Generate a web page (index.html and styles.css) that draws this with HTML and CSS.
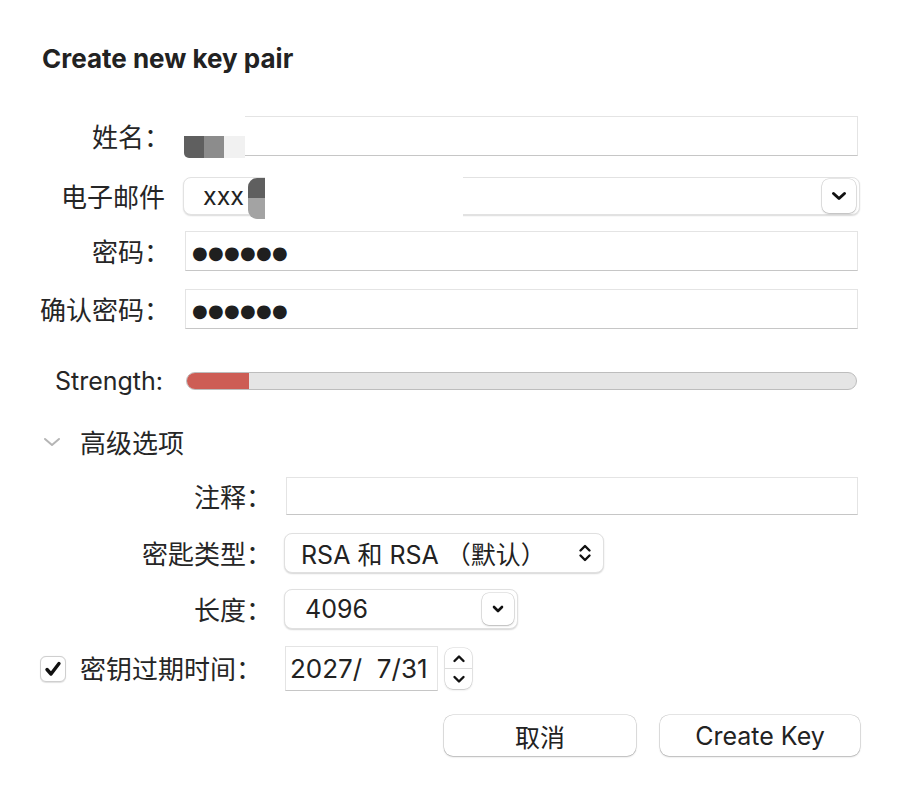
FILE: index.html
```html
<!DOCTYPE html>
<html lang="zh">
<head>
<meta charset="utf-8">
<title>Create new key pair</title>
<link rel="stylesheet" href="styles.css">
</head>
<body>
<div class="dialog">
  <h1 class="title">Create new key pair</h1>

  <div class="row row-name">
    <label class="label">姓名：</label>
    <div class="field field-text has-overlay">
      <div class="mosaic-name">
        <span class="m-white"></span>
        <span class="m-blocks"><i class="b1"></i><i class="b2"></i><i class="b3"></i></span>
      </div>
    </div>
  </div>

  <div class="row row-email">
    <label class="label label-nocolon">电子邮件</label>
    <div class="combo has-overlay">
      <span class="combo-text">xxx</span>
      <div class="mosaic-email"><i class="e1"></i><i class="e2"></i></div>
      <div class="mask-email"></div>
      <span class="drop-btn">
        <svg width="16" height="10" viewBox="0 0 16 10"><polyline points="2.5,2.5 8,7.5 13.5,2.5" fill="none" stroke="#111" stroke-width="3" stroke-linecap="round" stroke-linejoin="round"/></svg>
      </span>
    </div>
  </div>

  <div class="row row-pass">
    <label class="label">密码：</label>
    <div class="field field-text"><span class="dots">●●●●●●</span></div>
  </div>

  <div class="row row-confirm">
    <label class="label">确认密码：</label>
    <div class="field field-text"><span class="dots">●●●●●●</span></div>
  </div>

  <div class="row row-strength">
    <span class="label label-strength">Strength:</span>
    <div class="meter"><div class="meter-fill" style="width:62px"></div></div>
  </div>

  <div class="row row-adv">
    <svg class="adv-chev" width="18" height="10" viewBox="0 0 18 10"><polyline points="2,2 9,8 16,2" fill="none" stroke="#b5b5b5" stroke-width="2" stroke-linecap="round" stroke-linejoin="round"/></svg>
    <span class="adv-text">高级选项</span>
  </div>

  <div class="row row-comment">
    <label class="label label-adv">注释：</label>
    <div class="field field-text field-adv"></div>
  </div>

  <div class="row row-type">
    <label class="label label-adv">密匙类型：</label>
    <div class="popup popup-type">
      <span class="popup-text">RSA 和 RSA （默认）</span>
      <svg class="updown" width="14" height="20" viewBox="0 0 14 20"><polyline points="2.5,7.5 7,3 11.5,7.5" fill="none" stroke="#111" stroke-width="2.4" stroke-linecap="round" stroke-linejoin="round"/><polyline points="2.5,12.5 7,17 11.5,12.5" fill="none" stroke="#111" stroke-width="2.4" stroke-linecap="round" stroke-linejoin="round"/></svg>
    </div>
  </div>

  <div class="row row-length">
    <label class="label label-adv">长度：</label>
    <div class="popup popup-length">
      <span class="popup-text popup-num">4096</span>
      <span class="drop-btn drop-small">
        <svg width="12" height="8" viewBox="0 0 12 8"><polyline points="2,2 6,6 10,2" fill="none" stroke="#111" stroke-width="2.6" stroke-linecap="round" stroke-linejoin="round"/></svg>
      </span>
    </div>
  </div>

  <div class="row row-expire">
    <span class="checkbox">
      <svg width="18" height="16" viewBox="0 0 18 16"><polyline points="3,8.5 7,13 15,2.5" fill="none" stroke="#111" stroke-width="3.4" stroke-linecap="round" stroke-linejoin="round"/></svg>
    </span>
    <span class="expire-label">密钥过期时间：</span>
    <div class="date-field"><span class="date-text">2027/&nbsp;&nbsp;7/31</span></div>
    <div class="stepper">
      <span class="step step-up"><svg width="14" height="9" viewBox="0 0 14 9"><polyline points="2.5,7 7,2.5 11.5,7" fill="none" stroke="#111" stroke-width="2.4" stroke-linecap="round" stroke-linejoin="round"/></svg></span>
      <span class="step step-down"><svg width="14" height="9" viewBox="0 0 14 9"><polyline points="2.5,2 7,6.5 11.5,2" fill="none" stroke="#111" stroke-width="2.4" stroke-linecap="round" stroke-linejoin="round"/></svg></span>
    </div>
  </div>

  <div class="row row-buttons">
    <button class="btn btn-cancel">取消</button>
    <button class="btn btn-create">Create Key</button>
  </div>
</div>
</body>
</html>
```
FILE: styles.css
```css
* { box-sizing: border-box; }
html, body {
  margin: 0;
  padding: 0;
  background: #ffffff;
}
body {
  font-family: Inter, "Noto Sans CJK SC", sans-serif;
  color: #252525;
  font-size: 25px;
}
.dialog {
  width: 900px;
  height: 796px;
  padding: 44px 42px 0 30px;
  display: flex;
  flex-direction: column;
}
.title {
  margin: 0 0 0 12px;
  font-size: 26px;
  line-height: 30px;
  font-weight: 700;
  color: #222;
}
.row {
  display: flex;
  align-items: center;
}
.label {
  width: 140px;
  flex: none;
  text-align: right;
  font-size: 26px;
  line-height: 30px;
  padding-top: 3px;
  color: #262626;
}
.label-nocolon { padding-right: 5px; }
.label-strength {
  width: 133px;
  font-size: 25px;
  padding-top: 0;
}
.label-adv { width: 242px; }

.row-name { margin-top: 42px; height: 40px; }
.row-email { margin-top: 21px; height: 38px; }
.row-pass { margin-top: 16px; height: 40px; }
.row-confirm { margin-top: 18px; height: 40px; }
.row-strength { margin-top: 40px; height: 24px; }
.row-adv { margin-top: 34px; height: 30px; }
.row-comment { margin-top: 20px; height: 38px; }
.row-type { margin-top: 18px; height: 40px; }
.row-length { margin-top: 16px; height: 40px; }
.row-expire { margin-top: 17px; height: 45px; }
.row-buttons { margin-top: 24px; height: 41px; justify-content: flex-end; gap: 24px; }

.field {
  position: relative;
  flex: 1;
  height: 100%;
  margin-left: 15px;
  background: #fff;
  border: 1px solid #e4e4e4;
  border-bottom-color: #c6c6c6;
  display: flex;
  align-items: center;
}
.field-adv { margin-left: 14px; }
.dots {
  font-family: "DejaVu Sans", sans-serif;
  font-size: 18px;
  letter-spacing: 0.3px;
  padding-left: 6px;
  padding-top: 2px;
  color: #1f1f1f;
}

/* privacy mosaic over the name field */
.mosaic-name {
  position: absolute;
  left: -2px;
  top: -3px;
  width: 61px;
  height: 44px;
  display: flex;
  flex-direction: column;
}
.m-white { height: 22px; background: #fff; }
.m-blocks { flex: 1; display: flex; }
.m-blocks i { width: 20px; height: 100%; }
.m-blocks .b1 { background: #5f5f5f; border-bottom-left-radius: 5px; }
.m-blocks .b2 { background: #8c8c8c; }
.m-blocks .b3 { background: #f1f1f1; width: 21px; }

.combo {
  position: relative;
  flex: 1;
  height: 100%;
  margin-left: 13px;
  margin-right: -2px;
  background: #fff;
  border: 1px solid #e2e2e2;
  border-radius: 8px;
  box-shadow: 0 1px 1.5px rgba(0,0,0,0.14);
  display: flex;
  align-items: center;
}
.combo-text {
  padding-left: 19px;
  font-size: 25px;
  color: #222;
}
.mosaic-email {
  position: absolute;
  left: 64px;
  top: 0px;
  width: 17px;
  height: 41px;
  display: flex;
  flex-direction: column;
}
.mosaic-email .e1 { height: 20px; background: #5f5f5f; border-top-left-radius: 9px; }
.mosaic-email .e2 { flex: 1; background: #a3a3a3; border-bottom-left-radius: 9px; }
.mask-email {
  position: absolute;
  left: 81px;
  top: -3px;
  width: 198px;
  height: 45px;
  background: #fff;
}
.drop-btn {
  position: absolute;
  right: 3px;
  top: 1px;
  width: 34px;
  height: 34px;
  border-radius: 7px;
  background: #fff;
  box-shadow: 0 0 0 0.5px rgba(0,0,0,0.18), 0 1px 2px rgba(0,0,0,0.2);
  display: flex;
  align-items: center;
  justify-content: center;
}

.meter {
  position: relative;
  flex: 1;
  height: 18px;
  margin-left: 23px;
  margin-right: 1px;
  border: 1.5px solid #bdbdbd;
  border-radius: 9px;
  background: #e5e5e5;
  overflow: hidden;
}
.meter-fill {
  height: 100%;
  background: #cd5d55;
}

.adv-chev { margin-left: 13px; flex: none; }
.adv-text {
  margin-left: 19px;
  font-size: 26px;
  line-height: 30px;
  padding-top: 3px;
  color: #262626;
}

.popup {
  position: relative;
  height: 100%;
  margin-left: 12px;
  background: #fff;
  border: 1px solid #e0e0e0;
  border-radius: 8px;
  box-shadow: 0 1px 1.5px rgba(0,0,0,0.16);
  display: flex;
  align-items: center;
}
.popup-type { width: 320px; }
.popup-length { width: 234px; }
.popup-text {
  padding-left: 16px;
  font-size: 25px;
  color: #222;
  white-space: nowrap;
}
.popup-num { padding-left: 20px; }
.updown {
  position: absolute;
  right: 11px;
  top: 9px;
}
.drop-small {
  width: 32px;
  height: 32px;
  right: 3px;
  top: 3px;
}

.checkbox {
  width: 26px;
  height: 26px;
  margin-left: 10px;
  flex: none;
  border: 1px solid #cfcfcf;
  border-radius: 6px;
  background: #fff;
  box-shadow: 0 0.5px 1px rgba(0,0,0,0.12);
  display: flex;
  align-items: center;
  justify-content: center;
}
.expire-label {
  margin-left: 14px;
  width: 205px;
  font-size: 26px;
  line-height: 30px;
  padding-top: 3px;
  color: #262626;
}
.date-field {
  width: 153px;
  height: 45px;
  background: #fff;
  border: 1px solid #e4e4e4;
  border-bottom-color: #c6c6c6;
  display: flex;
  align-items: center;
}
.date-text {
  padding-left: 4px;
  font-size: 26px;
  color: #222;
  white-space: nowrap;
}
.stepper {
  margin-left: 7px;
  width: 27px;
  height: 41px;
  border-radius: 8px;
  background: #fff;
  box-shadow: 0 0 0 0.5px rgba(0,0,0,0.16), 0 1px 2px rgba(0,0,0,0.16);
  display: flex;
  flex-direction: column;
}
.step {
  flex: 1;
  display: flex;
  align-items: center;
  justify-content: center;
}
.step-up { border-bottom: 1px solid #dcdcdc; }

.btn {
  height: 41px;
  border: none;
  border-radius: 9px;
  background: #fff;
  box-shadow: 0 0 0 0.5px rgba(0,0,0,0.2), 0 1px 2px rgba(0,0,0,0.2);
  font-family: Inter, "Noto Sans CJK SC", sans-serif;
  font-size: 25px;
  color: #222;
  padding: 0;
}
.btn-cancel { width: 192px; }
.btn-create { width: 200px; margin-right: -2px; }
```
